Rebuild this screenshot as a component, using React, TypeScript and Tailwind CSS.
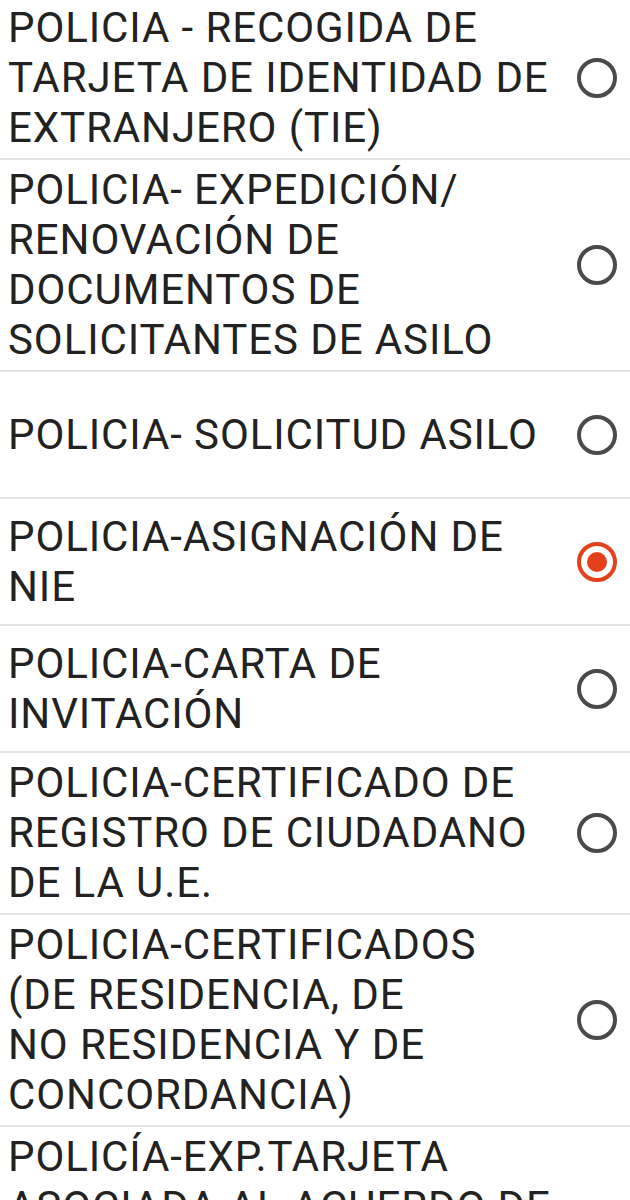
import React from 'react';

type Option = { lines: string[]; checked?: boolean };

const options: Option[] = [
  { lines: ['POLICIA - RECOGIDA DE', 'TARJETA DE IDENTIDAD DE', 'EXTRANJERO (TIE)'] },
  { lines: ['POLICIA- EXPEDICIÓN/', 'RENOVACIÓN DE', 'DOCUMENTOS DE', 'SOLICITANTES DE ASILO'] },
  { lines: ['POLICIA- SOLICITUD ASILO'] },
  { lines: ['POLICIA-ASIGNACIÓN DE', 'NIE'], checked: true },
  { lines: ['POLICIA-CARTA DE', 'INVITACIÓN'] },
  { lines: ['POLICIA-CERTIFICADO DE', 'REGISTRO DE CIUDADANO', 'DE LA U.E.'] },
  { lines: ['POLICIA-CERTIFICADOS', '(DE RESIDENCIA, DE', 'NO RESIDENCIA Y DE', 'CONCORDANCIA)'] },
  { lines: ['POLICÍA-EXP.TARJETA', 'ASOCIADA AL ACUERDO DE', 'RETIRADA DE CIUDADANOS', 'BRITÁNICOS'] },
];

const Radio: React.FC<{ checked?: boolean }> = ({ checked }) =>
  checked ? (
    <div className="w-[40px] h-[40px] rounded-full border-[4px] border-[#e4401c] flex items-center justify-center">
      <div className="w-[20px] h-[20px] rounded-full bg-[#e4401c]" />
    </div>
  ) : (
    <div className="w-[40px] h-[40px] rounded-full border-[4px] border-[#4a4a4a]" />
  );

export default function App() {
  return (
    <div className="w-[630px] h-[1200px] overflow-hidden bg-white" style={{ fontFamily: 'Roboto, "Liberation Sans", sans-serif' }}>
      {options.map((opt, i) => (
        <div key={i} className="flex items-center min-h-[127px] py-[5px] pl-[8px] pr-[13px] border-b-2 border-[#e2e2e2] first:-mt-[2px]">
          <div className="flex-1 text-[42px] leading-[50px] tracking-[0.9px] text-[#222222]">
            {opt.lines.map((l, j) => (
              <div key={j} className="whitespace-nowrap">{l}</div>
            ))}
          </div>
          <Radio checked={opt.checked} />
        </div>
      ))}
    </div>
  );
}
